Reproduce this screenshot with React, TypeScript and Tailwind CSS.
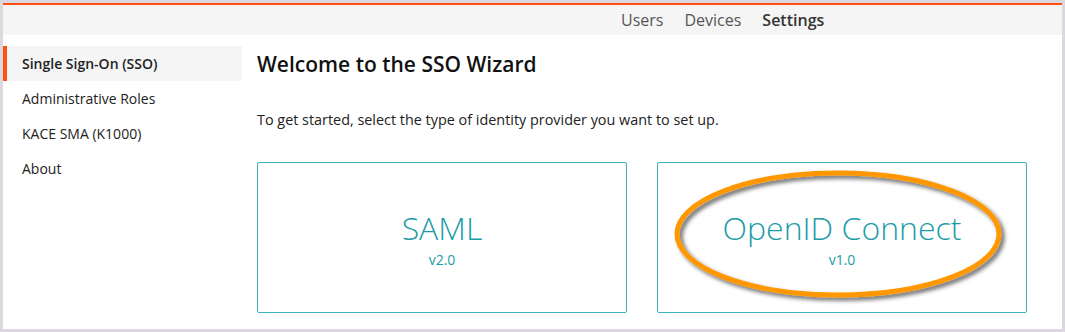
import React from "react";

// left menu entries
const menu = ["Single Sign-On (SSO)", "Administrative Roles", "KACE SMA (K1000)", "About"];

function ProviderCard({ name, version, circled }: { name: string; version: string; circled?: boolean }) {
  return (
    <div className="relative flex h-[151px] w-[370px] flex-col items-center justify-center rounded-[2px] border border-[#3cb0bd]">
      <div className="mt-[2px] text-[32px] font-light leading-[40px] text-[#1b9ca9]">{name}</div>
      <div className="mt-[2px] text-[14px] leading-[20px] text-[#1b9ca9]">{version}</div>
      {circled && (
        <svg className="pointer-events-none absolute left-[14px] top-[6px]" width="340" height="138" viewBox="0 0 340 138">
          <defs>
            <filter id="shadow" x="-10%" y="-20%" width="120%" height="140%">
              <feDropShadow dx="3" dy="3" stdDeviation="2" floodColor="#000" floodOpacity="0.6" />
            </filter>
          </defs>
          <ellipse cx="166" cy="65" rx="161" ry="61" fill="none" stroke="#ff9800" strokeWidth="5" filter="url(#shadow)" />
        </svg>
      )}
    </div>
  );
}

export default function App() {
  return (
    <div className="h-[332px] w-[1065px] bg-[#dbd8e0] p-[3px] font-['Open_Sans',sans-serif]">
      <div className="flex h-full flex-col bg-white">
        <div className="h-[2px] bg-[#ff4f12]" />
        <div className="flex h-[30px] items-center bg-[#f5f5f5] pl-[618px] text-[16px]">
          <span className="text-[#555]">Users</span>
          <span className="ml-[21px] text-[#555]">Devices</span>
          <span className="ml-[21px] font-semibold text-[#333]">Settings</span>
        </div>
        <div className="flex pt-[11px]">
          <ul className="w-[239px] text-[14px] text-[#222]">
            {menu.map((m, i) => (
              <li
                key={m}
                className={
                  i === 0
                    ? "flex h-[35px] items-center border-l-[4px] border-[#ff4f12] bg-[#f5f5f5] pl-[15px] font-semibold"
                    : "flex h-[35px] items-center pl-[19px]"
                }
              >
                {m}
              </li>
            ))}
          </ul>
          <div className="ml-[15px] flex-1">
            <h1 className="flex h-[38px] items-center text-[21px] font-semibold text-[#111]">Welcome to the SSO Wizard</h1>
            <p className="mt-[26px] text-[14.4px] leading-[20px] text-[#222]">
              To get started, select the type of identity provider you want to set up.
            </p>
            <div className="mt-[32px] flex gap-[30px]">
              <ProviderCard name="SAML" version="v2.0" />
              <ProviderCard name="OpenID Connect" version="v1.0" circled />
            </div>
          </div>
        </div>
      </div>
    </div>
  );
}
